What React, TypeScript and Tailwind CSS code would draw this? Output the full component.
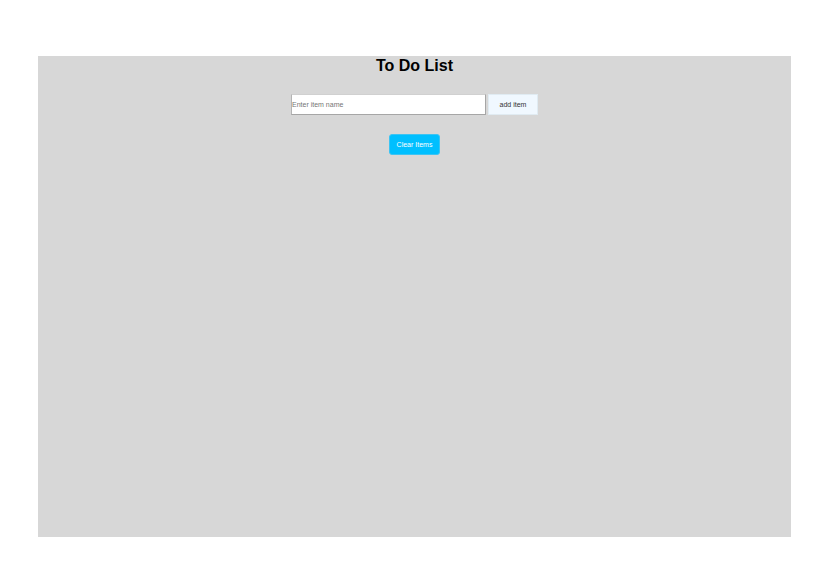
export default function App() {
  return (
    <div className="min-h-screen bg-white pt-14 pr-[45px] pb-[49px] pl-[38px] font-['Liberation_Sans',Arial,sans-serif]">
      <main className="flex min-h-[calc(100vh-105px)] flex-col items-center bg-[#d7d7d7]">
        <h1 className="text-[16px] leading-[20px] font-bold text-black">To Do List</h1>
        <form className="mt-[18px] flex gap-[2px]" onSubmit={(e) => e.preventDefault()}>
          <input
            type="text"
            aria-label="Item name"
            placeholder="Enter item name"
            className="h-[21px] w-[195px] border border-[#a6a6a6] border-t-[#d0d0d0] border-l-[#b4b4b4] bg-white text-[7px] text-black placeholder:text-[#757575]"
          />
          <button type="submit" className="h-[21px] w-[50px] border border-[#e0ebf2] bg-[#f0f8ff] pt-px text-[7px] text-[#333333]">
            add item
          </button>
        </form>
        <button type="button" className="mt-[19px] h-[21px] w-[51px] rounded-[3px] border border-[#3cc4f3] bg-[#00bfff] pt-px text-[7px] text-white">
          Clear Items
        </button>
      </main>
    </div>
  );
}
